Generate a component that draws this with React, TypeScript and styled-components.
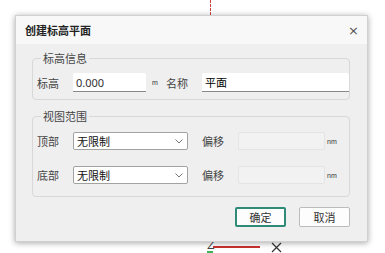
import styled, { createGlobalStyle } from 'styled-components'

const GlobalStyle = createGlobalStyle`
	html, body {
		margin: 0;
		padding: 0;
		background: #ffffff;
	}
	body {
		font-family: 'Noto Sans CJK SC', 'Noto Sans', sans-serif;
		color: #333;
	}
`

export default function App() {
	return (
		<Canvas>
			<GlobalStyle />
			<AxisDashed />
			<AxisX />
			<AxisZ>Z</AxisZ>
			<AxisXLabel>
				<svg width="11" height="11" viewBox="0 0 11 11">
					<path d="M1 1 L10 10 M10 1 L1 10" stroke="#333" strokeWidth="1.2" fill="none" />
				</svg>
			</AxisXLabel>
			<Dialog>
				<TitleBar>
					<Title>创建标高平面</Title>
					<Close>×</Close>
				</TitleBar>
				<Body>
					<Group>
						<Legend>标高信息</Legend>
						<Row>
							<Label>标高</Label>
							<TextInput $width={73} defaultValue="0.000" />
							<Unit>m</Unit>
							<Label $width={36}>名称</Label>
							<TextInput defaultValue="平面" $dark />
						</Row>
					</Group>
					<Group $second>
						<Legend>视图范围</Legend>
						<Rows>
							{['顶部', '底部'].map((name) => (
								<Row key={name}>
									<Label>{name}</Label>
									<Select>
										<span>无限制</span>
										<svg width="8" height="5" viewBox="0 0 8 5">
											<path d="M0.5 0.5 L4 4 L7.5 0.5" fill="none" stroke="#777" strokeWidth="1" />
										</svg>
									</Select>
									<Label $width={36} $gap={14}>偏移</Label>
									<DisabledInput />
									<Unit $nm>nm</Unit>
								</Row>
							))}
						</Rows>
					</Group>
					<Buttons>
						<Button $primary>确定</Button>
						<Button>取消</Button>
					</Buttons>
				</Body>
			</Dialog>
		</Canvas>
	)
}

const Canvas = styled.div`
	position: relative;
	width: 385px;
	height: 253px;
	overflow: hidden;
	padding: 15px 0 0 15px;
	box-sizing: border-box;
`

const AxisDashed = styled.div`
	position: absolute;
	left: 210px;
	top: 0;
	height: 15px;
	border-left: 1px dashed #c84040;
`

const AxisX = styled.div`
	position: absolute;
	left: 213px;
	top: 246px;
	width: 47px;
	height: 2px;
	background: #c83030;
`

const AxisZ = styled.div`
	position: absolute;
	left: 207px;
	top: 240px;
	font-family: 'DejaVu Sans', sans-serif;
	font-size: 11px;
	color: #444;
	border-bottom: 2px solid #3cb45a;
	line-height: 11px;
	width: 6px;
`

const AxisXLabel = styled.div`
	position: absolute;
	left: 271px;
	top: 242px;
	line-height: 0;
`

const Dialog = styled.div`
	position: relative;
	width: 353px;
	height: 227px;
	background: #efefef;
	border: 1px solid #d0d0d0;
	box-sizing: border-box;
	box-shadow: 0 1px 6px rgba(0, 0, 0, 0.35);
	display: flex;
	flex-direction: column;
`

const TitleBar = styled.div`
	height: 28px;
	background: #f8f8f8;
	display: flex;
	align-items: center;
	justify-content: space-between;
	padding: 0 8px 0 9px;
	flex-shrink: 0;
`

const Title = styled.span`
	font-size: 11px;
	font-weight: 700;
	color: #222;
`

const Close = styled.span`
	font-family: 'DejaVu Sans', sans-serif;
	font-size: 13px;
	color: #555;
	line-height: 1;
`

const Body = styled.div`
	padding: 7px 17px 0 16px;
	display: flex;
	flex-direction: column;
`

const Group = styled.fieldset<{ $second?: boolean }>`
	margin: ${({ $second }) => ($second ? '9px 0 0' : '0')};
	padding: ${({ $second }) => ($second ? '9px 0 12px 4px' : '8px 0 7px 4px')};
	border: 1px solid #d8d8d8;
	border-radius: 4px;
	min-width: 0;
`

const Legend = styled.legend`
	margin-left: 4px;
	padding: 0 2px;
	font-size: 11px;
	line-height: 14px;
	color: #444;
`

const Rows = styled.div`
	display: flex;
	flex-direction: column;
	gap: 16px;
`

const Row = styled.div`
	display: flex;
	align-items: center;
`

const Label = styled.span<{ $width?: number; $gap?: number }>`
	width: ${({ $width }) => $width ?? 36}px;
	margin-left: ${({ $gap }) => $gap ?? 0}px;
	flex-shrink: 0;
	font-size: 11px;
	color: #444;
`

const TextInput = styled.input<{ $width?: number; $dark?: boolean }>`
	width: ${({ $width }) => ($width ? `${$width}px` : 'auto')};
	flex: ${({ $width }) => ($width ? '0 0 auto' : '1 1 auto')};
	min-width: 0;
	height: 19px;
	box-sizing: border-box;
	border: none;
	border-bottom: 1px solid #8a8a8a;
	border-radius: 2px 2px 0 0;
	background: #ffffff;
	padding: 0 0 0 3px;
	font-family: 'Noto Sans', 'Noto Sans CJK SC', sans-serif;
	font-size: 11px;
	color: ${({ $dark }) => ($dark ? '#000' : '#333')};
	outline: none;
`

const Unit = styled.span<{ $nm?: boolean }>`
	font-family: 'Liberation Sans', sans-serif;
	font-size: 7px;
	color: #333;
	width: ${({ $nm }) => ($nm ? 'auto' : '14px')};
	margin-left: ${({ $nm }) => ($nm ? 2 : 6)}px;
	flex-shrink: 0;
`

const Select = styled.div`
	width: 115px;
	height: 18px;
	box-sizing: border-box;
	border: 1px solid #a2a2a2;
	border-radius: 2px;
	background: #ffffff;
	display: flex;
	align-items: center;
	justify-content: space-between;
	padding: 0 4px 0 3px;
	font-size: 11px;
	color: #111;
	flex-shrink: 0;
`

const DisabledInput = styled.div`
	width: 87px;
	height: 18px;
	box-sizing: border-box;
	border: 1px solid #e4e4e4;
	border-radius: 2px;
	background: #f2f2f2;
	flex-shrink: 0;
`

const Buttons = styled.div`
	display: flex;
	justify-content: flex-end;
	gap: 13px;
	margin-top: 10px;
`

const Button = styled.button<{ $primary?: boolean }>`
	width: 51px;
	height: 20px;
	box-sizing: border-box;
	border: ${({ $primary }) => ($primary ? '2px solid #2f8a78' : '1px solid #bcbcbc')};
	border-radius: 2px;
	background: #fdfdfd;
	font-family: 'Noto Sans CJK SC', sans-serif;
	font-size: 11px;
	color: #333;
	padding: 0;
	display: flex;
	align-items: center;
	justify-content: center;
`
